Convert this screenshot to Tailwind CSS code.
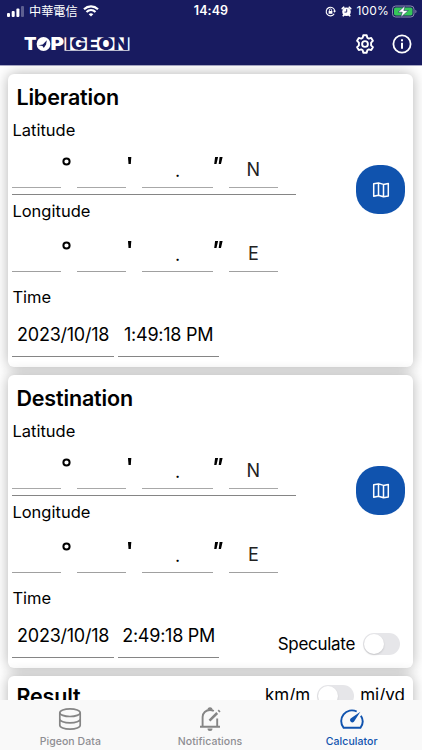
<!DOCTYPE html>
<html lang="en">
<head>
<meta charset="utf-8">
<meta name="viewport" content="width=device-width, initial-scale=1">
<title>Topigeon Calculator</title>
<script src="https://cdn.jsdelivr.net/npm/@tailwindcss/browser@4"></script>
</head>
<body class="h-[750px] w-[422px] overflow-hidden bg-white font-['Inter','Noto_Sans_CJK_TC',sans-serif] text-black">
<div class="relative flex h-[750px] flex-col overflow-hidden">
  <header class="h-[66px] shrink-0 border-b border-[#a9a9c6] bg-[#181b60] text-white">
    <div class="grid h-[22px] grid-cols-3 items-center">
      <div class="flex items-center pl-[7px]">
        <svg class="h-[11px] w-[18px] shrink-0" viewBox="0 0 18 11" fill="#fff"><rect x="0" y="7" width="3" height="4" rx="1"/><rect x="4.7" y="5" width="3" height="6" rx="1"/><rect x="9.4" y="2.5" width="3" height="8.5" rx="1"/><rect x="14" y="0" width="3" height="11" rx="1" opacity=".3"/></svg>
        <span class="ml-[4px] text-[12.2px] leading-[22px] whitespace-nowrap font-['Noto_Sans_CJK_TC',sans-serif]">中華電信</span>
        <svg class="ml-[5px] h-[12px] w-[16px] shrink-0" viewBox="0 0 16 12" fill="none" stroke="#fff" stroke-width="2.2"><path d="M1 4.2c4-3.8 10-3.8 14 0M3.5 7c2.6-2.4 6.4-2.4 9 0"/><path d="M8 11.5 5.7 9.2c1.3-1.2 3.3-1.2 4.6 0z" fill="#fff" stroke="none"/></svg>
      </div>
      <div class="text-center text-[12.5px] leading-[22px] font-semibold tracking-[0.1px]">14:49</div>
      <div class="flex items-center justify-end pr-[5px]">
        <svg class="h-[11px] w-[11px] shrink-0" viewBox="0 0 11 11" fill="none" stroke="#fff" stroke-width="1.1"><path d="M9.2 7.8A4.3 4.3 0 1 1 9.8 5.2"/><path d="M8 4.7h3L9.6 6.8z" fill="#fff" stroke="none"/><rect x="3.6" y="5" width="3.8" height="2.8" fill="#fff" stroke="none"/><path d="M4.4 5V4a1.1 1.1 0 0 1 2.2 0v1" stroke-width=".8"/></svg>
        <svg class="ml-[5px] h-[11px] w-[11px] shrink-0" viewBox="0 0 11 11"><circle cx="5.5" cy="5.8" r="4.3" fill="#fff"/><path d="M1.3 2.6 2.7 1.300M9.700 2.600 8.300 1.300M2.300 9.700l1-1M8.700 9.700l-1-1" stroke="#fff" stroke-width="1.8" stroke-linecap="round"/><path d="M5.7 3.2v2.900H3.500" fill="none" stroke="#181b60" stroke-width=".9"/></svg>
        <span class="ml-[4px] text-[12px] leading-[22px] tracking-[0.2px]">100%</span>
        <svg class="ml-[3px] h-[13px] w-[25px] shrink-0" viewBox="0 0 25 13"><rect x=".5" y="1" width="21.5" height="11" rx="3.2" fill="none" stroke="#8c8daf"/><rect x="2" y="2.5" width="18.5" height="8" rx="1.8" fill="#35c759"/><path d="M23.4 4.8c1.500.6 1.500 2.900 0 3.500z" fill="#8c8daf"/><path d="M13.200.6 6 7.200h4.300L8.700 12.400l7.600-6.900h-4.500z" fill="#fff" stroke="#181b60" stroke-width=".5"/></svg>
      </div>
    </div>
    <div class="flex h-[43px] items-center pr-[10px] pl-[24px]">
      <svg class="h-[24px] w-[106px] overflow-visible" viewBox="0 -5 106 24" font-family="Inter, sans-serif" font-weight="900" font-size="17">
        <text x="0" y="13.100" fill="#fff" textLength="12.500" lengthAdjust="spacingAndGlyphs">T</text>
        <circle cx="19.500" cy="7" r="6.900" fill="#fff"/>
        <path d="M14.500 8.200 18.800 7.600 22.800 3.200 22.100 7.500 19.800 11 18.500 9.100z" fill="#181b60"/>
        <text x="26.600" y="13.100" fill="#fff" textLength="13.500" lengthAdjust="spacingAndGlyphs">P</text>
        <rect x="40.500" y=".3" width="65" height="13.400" fill="#fff"/>
        <text x="41.300" y="13.100" fill="#181b60" textLength="63.500" lengthAdjust="spacingAndGlyphs">IGEON</text>
      </svg>
      <svg class="ml-auto h-[20px] w-[20px]" viewBox="0 0 20 20" fill="none" stroke="#fff" stroke-width="1.900" stroke-linejoin="round"><path d="M8.300 1.300h3.400l.6 2.400 1.500.9 2.400-.7 1.700 2.900-1.800 1.800v2.800l1.800 1.800-1.700 2.900-2.400-.7-1.500.9-.6 2.400H8.300l-.6-2.400-1.500-.9-2.400.7-1.700-2.900 1.800-1.800V8.600L2.100 6.800l1.700-2.900 2.400.7 1.500-.9z"/><circle cx="10" cy="10" r="2.900"/></svg>
      <svg class="ml-[17px] h-[20px] w-[20px]" viewBox="0 0 20 20"><circle cx="10" cy="10" r="8.600" fill="none" stroke="#fff" stroke-width="1.800"/><path d="M9 8.700h2v6H9zM9 5.200h2v2H9z" fill="#fff"/></svg>
    </div>
  </header>

  <main class="flex grow flex-col gap-[8px] pr-[9px] pl-[8.400px] pt-[8px]">
    <section class="flex h-[293px] shrink-0 rounded-[6px] bg-white pl-[4px] shadow-[0_0_14px_rgba(0,0,0,0.3)]">
      <div class="w-[283.500px] shrink-0">
        <h2 class="h-[46px] pl-[4px] text-[21.500px] leading-[46px] font-semibold tracking-[-0.150px]">Liberation</h2>
        <div class="h-[20px] text-[16.500px] leading-[20px]">Latitude</div>
        <div class="flex h-[48px] text-[18px]">
          <div class="w-[49px] border-b border-[#a8a8a8]"></div>
          <div class="flex w-[16px] justify-center pt-[17px] pr-[5px]"><svg class="h-[9px] w-[9px] shrink-0" viewBox="0 0 9 9"><circle cx="4.500" cy="4.500" r="3.100" fill="none" stroke="#000" stroke-width="2"/></svg></div>
          <div class="w-[49px] border-b border-[#a8a8a8]"></div>
          <div class="flex w-[16px] pt-[17px] pl-[2px]"><svg class="h-[7px] w-[4px]" viewBox="0 0 4 7"><path d="M0 0h3.300L2.800 7H.5z"/></svg></div>
          <div class="w-[70.500px] border-b border-[#a8a8a8] text-center leading-[61px]">.</div>
          <div class="flex w-[16px] pt-[17px] pl-[1px]"><svg class="h-[7px] w-[9px]" viewBox="0 0 9 7"><path d="M1.100 0h3L2.500 7H.2zM5.600 0h3L7 7H4.700z"/></svg></div>
          <div class="w-[49px] border-b border-[#a8a8a8] text-center leading-[59px] text-[#222]">N</div>
        </div>
        <div class="mt-[6px] h-px bg-[#858585]"></div>
        <div class="mt-[6px] h-[20px] text-[16.500px] leading-[20px]">Longitude</div>
        <div class="flex h-[51px] text-[18px]">
          <div class="w-[49px] border-b border-[#a0a0a0]"></div>
          <div class="flex w-[16px] justify-center pt-[20px] pr-[5px]"><svg class="h-[9px] w-[9px] shrink-0" viewBox="0 0 9 9"><circle cx="4.500" cy="4.500" r="3.100" fill="none" stroke="#000" stroke-width="2"/></svg></div>
          <div class="w-[49px] border-b border-[#a0a0a0]"></div>
          <div class="flex w-[16px] pt-[20px] pl-[2px]"><svg class="h-[7px] w-[4px]" viewBox="0 0 4 7"><path d="M0 0h3.300L2.800 7H.5z"/></svg></div>
          <div class="w-[70.500px] border-b border-[#a0a0a0] text-center leading-[67px]">.</div>
          <div class="flex w-[16px] pt-[20px] pl-[1px]"><svg class="h-[7px] w-[9px]" viewBox="0 0 9 7"><path d="M1.100 0h3L2.500 7H.2zM5.600 0h3L7 7H4.700z"/></svg></div>
          <div class="w-[49px] border-b border-[#a0a0a0] text-center leading-[66px] text-[#222]">E</div>
        </div>
        <div class="mt-[15px] h-[20px] text-[16.500px] leading-[20px]">Time</div>
        <div class="flex h-[50px] gap-[4px] text-[18px] leading-[55px] tracking-[-0.250px] whitespace-nowrap">
          <div class="flex w-[101.500px] justify-center border-b border-[#858585]">2023/10/18</div>
          <div class="flex w-[101.500px] justify-center border-b border-[#858585]">1:49:18 PM</div>
        </div>
      </div>
      <div class="flex grow flex-col items-end">
        <button class="mt-[91px] mr-[8px] flex h-[49px] w-[49px] items-center justify-center rounded-[22px] bg-[#1053ae]" aria-label="Map"><svg class="h-[16px] w-[18px]" viewBox="0 0 18 16" fill="none" stroke="#fff" stroke-width="1.500" stroke-linejoin="round"><path d="M1.700 1.700 6.500.9l5 1.500 4.800-.9v12.400l-4.800.9-5-1.500-4.800.9zM6.500.9v12.400M11.500 2.400v12.400"/></svg></button>
      </div>
    </section>

    <section class="flex h-[293px] shrink-0 rounded-[6px] bg-white pl-[4px] shadow-[0_0_14px_rgba(0,0,0,0.3)]">
      <div class="w-[283.500px] shrink-0">
        <h2 class="h-[46px] pl-[4px] text-[21.500px] leading-[46px] font-semibold tracking-[-0.150px]">Destination</h2>
        <div class="h-[20px] text-[16.500px] leading-[20px]">Latitude</div>
        <div class="flex h-[48px] text-[18px]">
          <div class="w-[49px] border-b border-[#a8a8a8]"></div>
          <div class="flex w-[16px] justify-center pt-[17px] pr-[5px]"><svg class="h-[9px] w-[9px] shrink-0" viewBox="0 0 9 9"><circle cx="4.500" cy="4.500" r="3.100" fill="none" stroke="#000" stroke-width="2"/></svg></div>
          <div class="w-[49px] border-b border-[#a8a8a8]"></div>
          <div class="flex w-[16px] pt-[17px] pl-[2px]"><svg class="h-[7px] w-[4px]" viewBox="0 0 4 7"><path d="M0 0h3.300L2.800 7H.5z"/></svg></div>
          <div class="w-[70.500px] border-b border-[#a8a8a8] text-center leading-[61px]">.</div>
          <div class="flex w-[16px] pt-[17px] pl-[1px]"><svg class="h-[7px] w-[9px]" viewBox="0 0 9 7"><path d="M1.100 0h3L2.500 7H.2zM5.600 0h3L7 7H4.700z"/></svg></div>
          <div class="w-[49px] border-b border-[#a8a8a8] text-center leading-[59px] text-[#222]">N</div>
        </div>
        <div class="mt-[6px] h-px bg-[#858585]"></div>
        <div class="mt-[6px] h-[20px] text-[16.500px] leading-[20px]">Longitude</div>
        <div class="flex h-[51px] text-[18px]">
          <div class="w-[49px] border-b border-[#a0a0a0]"></div>
          <div class="flex w-[16px] justify-center pt-[20px] pr-[5px]"><svg class="h-[9px] w-[9px] shrink-0" viewBox="0 0 9 9"><circle cx="4.500" cy="4.500" r="3.100" fill="none" stroke="#000" stroke-width="2"/></svg></div>
          <div class="w-[49px] border-b border-[#a0a0a0]"></div>
          <div class="flex w-[16px] pt-[20px] pl-[2px]"><svg class="h-[7px] w-[4px]" viewBox="0 0 4 7"><path d="M0 0h3.300L2.800 7H.5z"/></svg></div>
          <div class="w-[70.500px] border-b border-[#a0a0a0] text-center leading-[67px]">.</div>
          <div class="flex w-[16px] pt-[20px] pl-[1px]"><svg class="h-[7px] w-[9px]" viewBox="0 0 9 7"><path d="M1.100 0h3L2.500 7H.2zM5.600 0h3L7 7H4.700z"/></svg></div>
          <div class="w-[49px] border-b border-[#a0a0a0] text-center leading-[66px] text-[#222]">E</div>
        </div>
        <div class="mt-[15px] h-[20px] text-[16.500px] leading-[20px]">Time</div>
        <div class="flex h-[50px] gap-[4px] text-[18px] leading-[55px] tracking-[-0.250px] whitespace-nowrap">
          <div class="flex w-[101.500px] justify-center border-b border-[#858585]">2023/10/18</div>
          <div class="flex w-[101.500px] justify-center border-b border-[#858585]">2:49:18 PM</div>
        </div>
      </div>
      <div class="flex min-w-0 grow flex-col items-end">
        <button class="mt-[91px] mr-[8px] flex h-[49px] w-[49px] shrink-0 items-center justify-center rounded-[22px] bg-[#1053ae]" aria-label="Map"><svg class="h-[16px] w-[18px]" viewBox="0 0 18 16" fill="none" stroke="#fff" stroke-width="1.500" stroke-linejoin="round"><path d="M1.700 1.700 6.500.9l5 1.500 4.800-.9v12.400l-4.800.9-5-1.500-4.800.9zM6.500.9v12.400M11.500 2.400v12.400"/></svg></button>
        <div class="mt-[118px] mr-[13px] flex items-center gap-[8px]">
          <span class="text-[17px] leading-[22px] tracking-[-0.300px]">Speculate</span>
          <div class="h-[22px] w-[37px] shrink-0 rounded-full bg-[#e6e6e9] p-[1px]"><div class="h-[20px] w-[20px] rounded-full bg-white shadow-[0_1px_2px_rgba(0,0,0,0.15)]"></div></div>
        </div>
      </div>
    </section>

    <section class="flex h-[90px] shrink-0 items-start rounded-[6px] bg-white pr-[8px] pl-[8px] shadow-[0_0_14px_rgba(0,0,0,0.3)]">
      <h2 class="text-[21.500px] leading-[40px] font-semibold tracking-[-0.150px]">Result</h2>
      <div class="ml-auto flex h-[40px] items-center gap-[6.500px] text-[17px]">
        <span>km/m</span>
        <div class="h-[22px] w-[37px] shrink-0 rounded-full bg-[#e6e6e9] p-[1px]"><div class="h-[20px] w-[20px] rounded-full bg-white shadow-[0_1px_2px_rgba(0,0,0,0.15)]"></div></div>
        <span>mi/yd</span>
      </div>
    </section>
  </main>

  <nav class="absolute inset-x-0 bottom-0 grid h-[50px] grid-cols-3 bg-[#f9f9f9] text-[10.500px] font-medium text-[#8e8e93]">
    <div class="flex flex-col items-center pt-[7px]">
      <svg class="h-[24px] w-[24px]" viewBox="0 0 24 24" fill="none" stroke="#858585" stroke-width="1.700"><ellipse cx="12" cy="5.700" rx="10.200" ry="3.800"/><path d="M1.800 5.700v12.500c0 2.200 4.400 3.900 10.200 3.900s10.200-1.700 10.200-3.900V5.700M1.800 12c0 2.200 4.400 3.900 10.200 3.900S22.200 14.200 22.200 12"/></svg>
      <span class="mt-[4px] leading-[14px] tracking-[0.050px]">Pigeon Data</span>
    </div>
    <div class="flex flex-col items-center pt-[7px] pr-[2px]">
      <svg class="h-[24px] w-[24px]" viewBox="0 0 24 24" fill="none" stroke="#858585" stroke-width="1.900"><path d="M2 19.800h20M4.600 19.500V10c0-4 3.200-7 7.400-7 1.500 0 2.700.4 3.800 1M19.200 19.500V11.500"/><path d="M9.500 2.800a2.500 2.500 0 0 1 5 0zM9.500 21.500a2.500 2.500 0 0 0 5 0z" fill="#858585" stroke="none"/><path d="m11.500 13.700 7.700-7.700M20.500 4.700l1.200-1.200" stroke-width="2.500"/></svg>
      <span class="mt-[4px] leading-[14px] tracking-[0.050px]">Notifications</span>
    </div>
    <div class="flex flex-col items-center pt-[7px] text-[#1053ae]">
      <svg class="h-[24px] w-[24px]" viewBox="0 0 24 24" fill="none" stroke="#1053ae" stroke-width="1.900"><path d="M16.700 4.500A10.700 10.700 0 0 0 3.500 20.700H20.500A10.700 10.700 0 0 0 20.900 8.700"/><path d="M20.400 4.700 13.900 14.800a2.300 2.300 0 0 1-3.300-3.200z" fill="#1053ae" stroke="none"/></svg>
      <span class="mt-[4px] leading-[14px] tracking-[0.050px]">Calculator</span>
    </div>
  </nav>
</div>
</body>
</html>
